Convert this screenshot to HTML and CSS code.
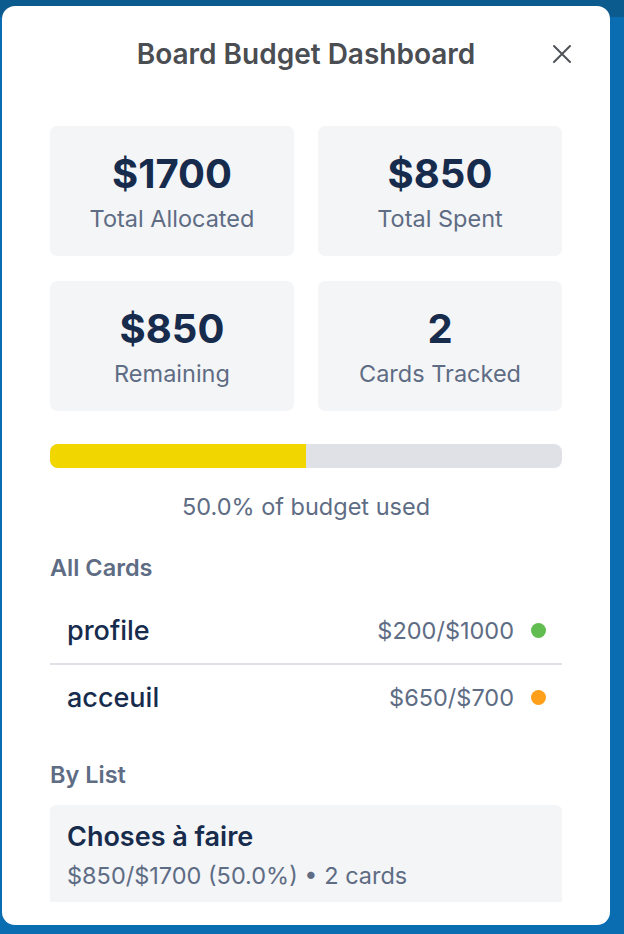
FILE: index.html
```html
<!DOCTYPE html>
<html lang="en">
<head>
<meta charset="utf-8">
<title>Board Budget Dashboard</title>
<link rel="stylesheet" href="styles.css">
</head>
<body>
<div class="backdrop">
  <div class="topbar"></div>
</div>
<div class="modal">
  <header class="modal-header">
    <h1 class="modal-title">Board Budget Dashboard</h1>
    <button class="close" aria-label="Close">
      <svg viewBox="0 0 24 24" width="24" height="24"><path d="M4 4 L20 20 M20 4 L4 20" stroke="currentColor" stroke-width="2" stroke-linecap="round" fill="none"/></svg>
    </button>
  </header>
  <div class="modal-body">
    <div class="stats">
      <div class="stat"><div class="stat-value">$1700</div><div class="stat-label">Total Allocated</div></div>
      <div class="stat"><div class="stat-value">$850</div><div class="stat-label">Total Spent</div></div>
      <div class="stat"><div class="stat-value">$850</div><div class="stat-label">Remaining</div></div>
      <div class="stat"><div class="stat-value">2</div><div class="stat-label">Cards Tracked</div></div>
    </div>
    <div class="progress"><div class="progress-fill" style="width: 50%"></div></div>
    <div class="progress-text">50.0% of budget used</div>

    <h2 class="section-title">All Cards</h2>
    <ul class="card-list">
      <li class="card-row"><span class="card-name">profile</span><span class="card-amount">$200/$1000</span><span class="dot dot-green"></span></li>
      <li class="card-row"><span class="card-name">acceuil</span><span class="card-amount">$650/$700</span><span class="dot dot-orange"></span></li>
    </ul>

    <h2 class="section-title by-list">By List</h2>
    <div class="list-card">
      <div class="list-name">Choses à faire</div>
      <div class="list-meta">$850/$1700 (50.0%) • 2 cards</div>
    </div>
  </div>
</div>
</body>
</html>
```

FILE: styles.css
```css
* { box-sizing: border-box; }
html, body {
  margin: 0;
  padding: 0;
  width: 624px;
  height: 934px;
  overflow: hidden;
}
body {
  background: #0a6db2;
  font-family: Inter, "Noto Sans", sans-serif;
  position: relative;
}
.backdrop {
  position: absolute;
  inset: 0;
  background: #0a6db2;
}
.topbar {
  height: 17px;
  background: #0b5b8f;
}
.modal {
  position: absolute;
  left: 2px;
  top: 6px;
  width: 608px;
  height: 919px;
  background: #ffffff;
  border-radius: 13px;
  overflow: hidden;
  display: flex;
  flex-direction: column;
}
.modal-header {
  position: relative;
  height: 96px;
  display: flex;
  align-items: center;
  justify-content: center;
  padding-bottom: 0;
}
.modal-title {
  margin: 0;
  font-family: Inter, "Noto Sans", sans-serif;
  font-weight: 600;
  font-size: 28px;
  color: #4a4d52;
  letter-spacing: 0;
}
.close {
  position: absolute;
  right: 36px;
  top: 36px;
  width: 24px;
  height: 24px;
  padding: 0;
  border: 0;
  background: none;
  color: #4f5257;
  display: flex;
}
.modal-body {
  padding: 24px 48px 0;
  height: 800px;
  overflow: hidden;
}
.stats {
  display: grid;
  grid-template-columns: 1fr 1fr;
  gap: 25px 24px;
}
.stat {
  height: 130px;
  background: #f4f5f7;
  border-radius: 7px;
  display: flex;
  flex-direction: column;
  align-items: center;
  justify-content: center;
  gap: 7px;
  padding-bottom: 0;
}
.stat-value {
  font-size: 40px;
  line-height: 48px;
  font-weight: 700;
  color: #172b4d;
}
.stat-label {
  font-size: 23.5px;
  line-height: 28px;
  color: #5e6c84;
}
.progress {
  margin-top: 33px;
  height: 24px;
  background: #dfe1e6;
  border-radius: 8px;
  overflow: hidden;
}
.progress-fill {
  height: 100%;
  background: #f2d600;
}
.progress-text {
  margin-top: 25px;
  text-align: center;
  font-size: 23.5px;
  line-height: 28px;
  color: #5e6c84;
}
.section-title {
  margin: 33px 0 0;
  font-size: 23.5px;
  line-height: 28px;
  font-weight: 600;
  color: #5e6c84;
}
.card-list {
  list-style: none;
  margin: 15px 0 0;
  padding: 0;
}
.card-row {
  height: 66px;
  display: flex;
  align-items: center;
  padding: 0 16px 0 17px;
}
.card-row + .card-row {
  border-top: 2px solid #dfe1e6;
}
.card-name {
  flex: 1;
  font-size: 27px;
  font-weight: 500;
  color: #172b4d;
}
.card-amount {
  font-size: 23.5px;
  color: #5e6c84;
}
.dot {
  width: 15px;
  height: 15px;
  border-radius: 50%;
  margin-left: 17px;
}
.dot-green { background: #61bd4f; }
.dot-orange { background: #ff9f1a; }
.by-list {
  margin-top: 32px;
}
.list-card {
  margin-top: 16px;
  background: #f4f5f7;
  border-radius: 6px;
  padding: 16px 17px 20px;
}
.list-name {
  font-size: 27px;
  line-height: 32px;
  font-weight: 600;
  color: #172b4d;
}
.list-meta {
  margin-top: 9px;
  font-size: 23.5px;
  line-height: 28px;
  color: #5e6c84;
}
```
